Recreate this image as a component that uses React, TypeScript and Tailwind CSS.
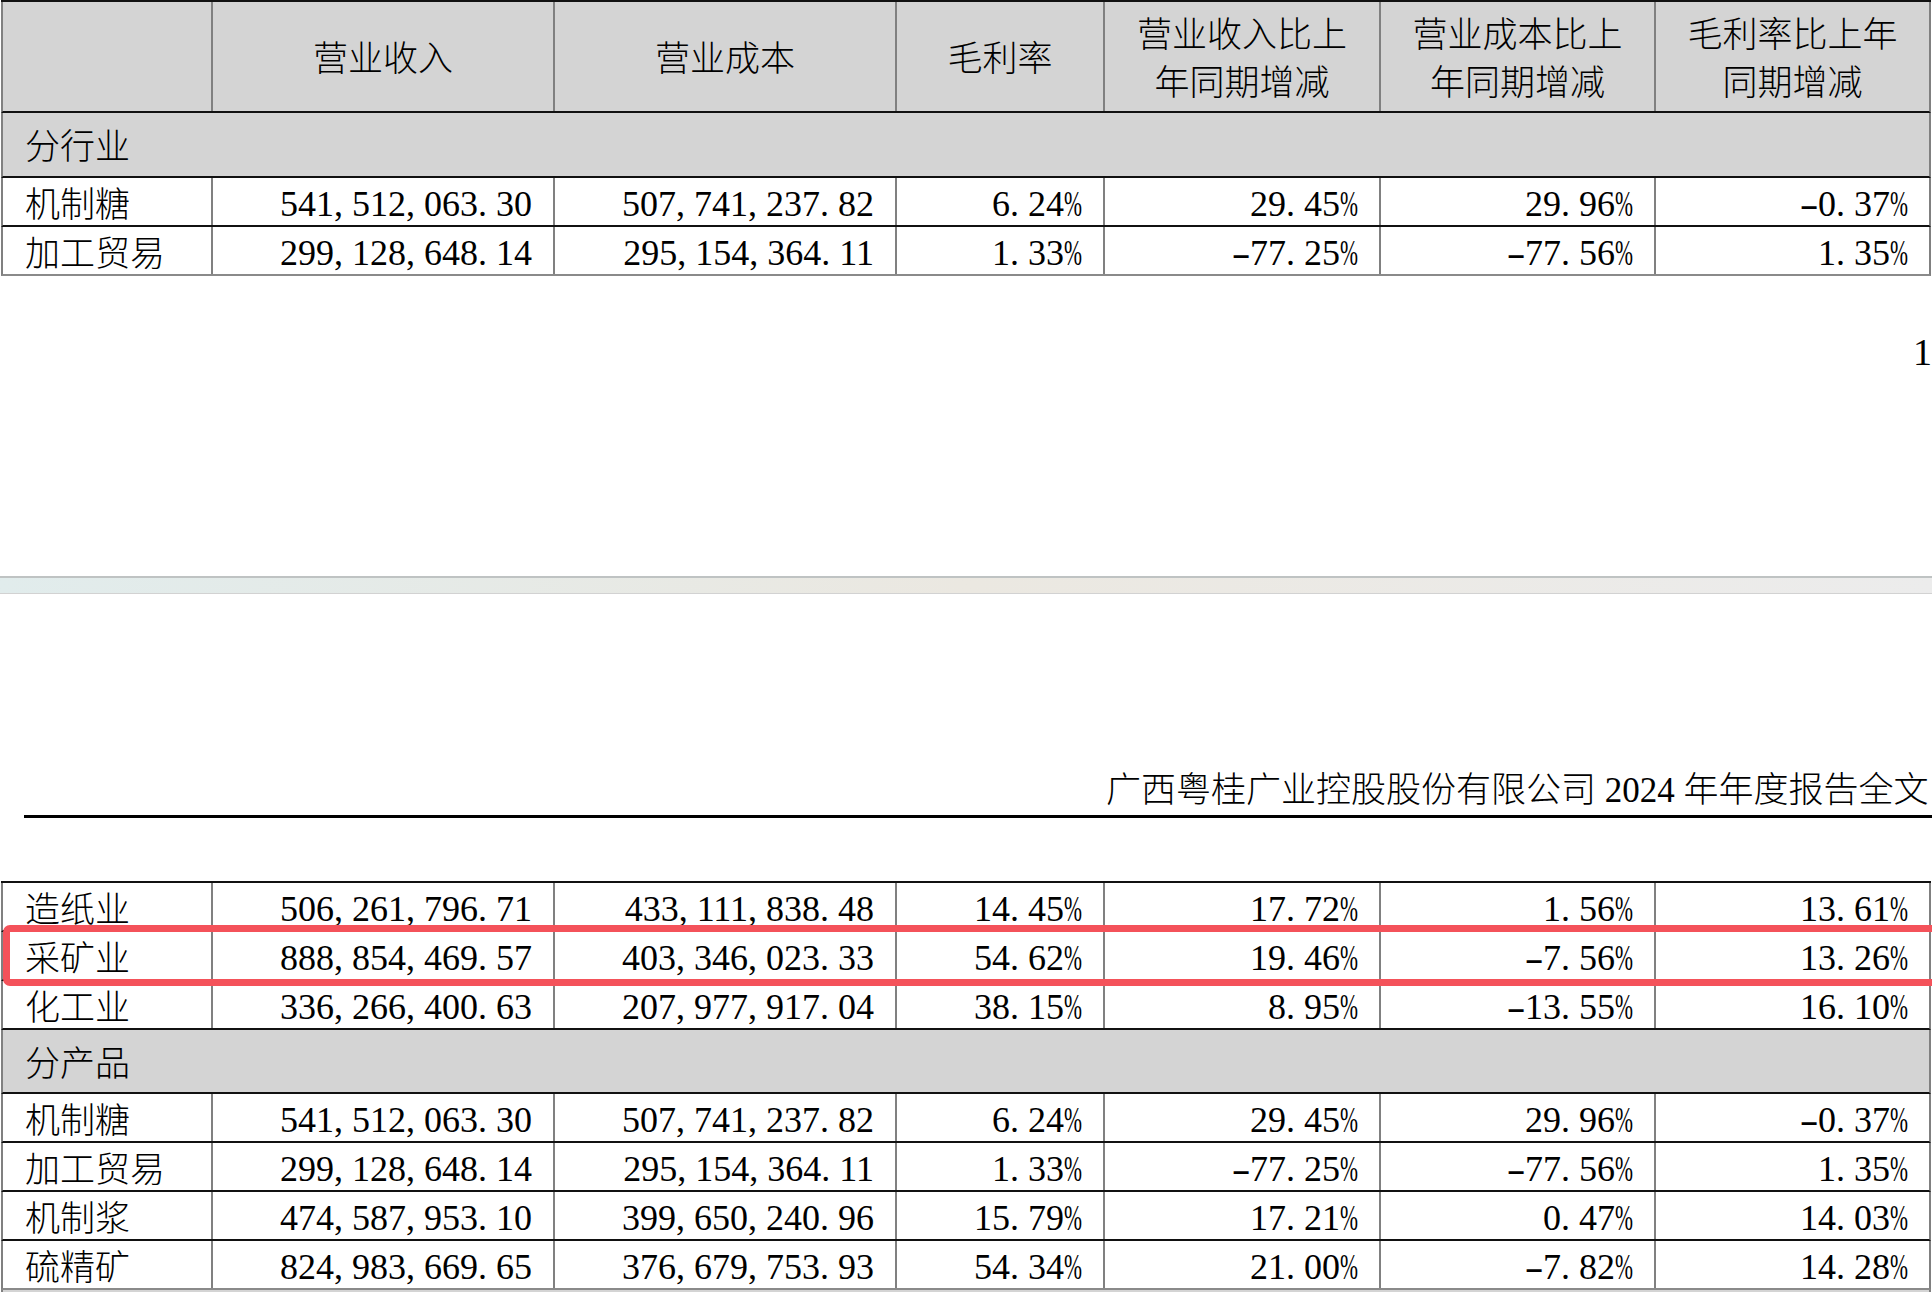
import React from "react";

type Row = { label: string; vals: string[] };

const topRows: Row[] = [
  { label: "机制糖", vals: ["541,512,063.30", "507,741,237.82", "6.24%", "29.45%", "29.96%", "-0.37%"] },
  { label: "加工贸易", vals: ["299,128,648.14", "295,154,364.11", "1.33%", "-77.25%", "-77.56%", "1.35%"] },
];

const bottomRows1: Row[] = [
  { label: "造纸业", vals: ["506,261,796.71", "433,111,838.48", "14.45%", "17.72%", "1.56%", "13.61%"] },
  { label: "采矿业", vals: ["888,854,469.57", "403,346,023.33", "54.62%", "19.46%", "-7.56%", "13.26%"] },
  { label: "化工业", vals: ["336,266,400.63", "207,977,917.04", "38.15%", "8.95%", "-13.55%", "16.10%"] },
];

const bottomRows2: Row[] = [
  { label: "机制糖", vals: ["541,512,063.30", "507,741,237.82", "6.24%", "29.45%", "29.96%", "-0.37%"] },
  { label: "加工贸易", vals: ["299,128,648.14", "295,154,364.11", "1.33%", "-77.25%", "-77.56%", "1.35%"] },
  { label: "机制浆", vals: ["474,587,953.10", "399,650,240.96", "15.79%", "17.21%", "0.47%", "14.03%"] },
  { label: "硫精矿", vals: ["824,983,669.65", "376,679,753.93", "54.34%", "21.00%", "-7.82%", "14.28%"] },
];

const widths = ["w-[342px]", "w-[342px]", "w-[208px]", "w-[276px]", "w-[275px]", "w-[275px]"];

function Num({ s }: { s: string }) {
  return (
    <span className="whitespace-nowrap">
      {s.split("").map((c, i) => {
        if (c === "," || c === ".")
          return (
            <span key={i} className="inline-block w-[0.5em] text-left">
              {c}
            </span>
          );
        if (c === "%")
          return (
            <span key={i} className="inline-block w-[0.5em] whitespace-nowrap text-left">
              <span className="inline-block origin-left scale-x-[0.6]">%</span>
            </span>
          );
        if (c === "-")
          return (
            <span key={i} className="inline-block w-[0.5em] text-center">
              <span className="inline-block scale-x-[1.6]">-</span>
            </span>
          );
        return <span key={i}>{c}</span>;
      })}
    </span>
  );
}

function DataRow({ row, last, highlight }: { row: Row; last?: boolean; highlight?: boolean }) {
  return (
    <div
      className={
        "relative flex h-[49px] border-x-2 border-x-[#808080] border-b-2 " +
        (last ? "border-b-[#8a8a8a]" : "border-b-[#111111]")
      }
    >
      <div className="flex w-[208px] items-center pl-[22px] pt-[7px] text-[35px] leading-none font-light">
        {row.label}
      </div>
      {row.vals.map((v, i) => (
        <div
          key={i}
          className={
            widths[i] +
            " flex items-center justify-end border-l-2 border-l-[#808080] pr-[21px] pt-[4px] text-[36px] leading-none"
          }
        >
          <Num s={v} />
        </div>
      ))}
      {highlight && (
        <div className="pointer-events-none absolute z-10 -top-[7px] -bottom-[7px] left-0 -right-[20px] rounded-[7px] border-[7px] border-solid border-[#f4525a]" />
      )}
    </div>
  );
}

function GroupRow({ label, h }: { label: string; h: string }) {
  return (
    <div
      className={
        h +
        " flex items-center border-x-2 border-x-[#808080] border-b-2 border-b-[#111111] bg-[#d4d4d4] pl-[22px] pt-[6px] text-[35px] leading-none font-light"
      }
    >
      {label}
    </div>
  );
}

function Header() {
  const heads: string[][] = [
    ["营业收入"],
    ["营业成本"],
    ["毛利率"],
    ["营业收入比上", "年同期增减"],
    ["营业成本比上", "年同期增减"],
    ["毛利率比上年", "同期增减"],
  ];
  return (
    <div className="flex h-[111px] border-x-2 border-x-[#808080] border-b-2 border-b-[#111111] bg-[#d4d4d4]">
      <div className="w-[208px]" />
      {heads.map((h, i) => (
        <div
          key={i}
          className={
            widths[i] +
            " flex flex-col items-center justify-center border-l-2 border-l-[#808080] pt-[6px] text-[35px] leading-[48px] font-light"
          }
        >
          {h.map((line, j) => (
            <div key={j} className="whitespace-nowrap">
              {line}
            </div>
          ))}
        </div>
      ))}
    </div>
  );
}

export default function App() {
  return (
    <div className="h-[1292px] w-[1932px] overflow-hidden bg-white text-black [font-family:'Liberation_Serif','Noto_Sans_CJK_SC',serif]">
      {/* top table */}
      <div className="ml-[1px] w-[1930px] border-t-2 border-t-[#111111]">
        <Header />
        <GroupRow label="分行业" h="h-[65px]" />
        {topRows.map((r, i) => (
          <DataRow key={i} row={r} last={i === topRows.length - 1} />
        ))}
      </div>

      {/* page number fragment */}
      <div className="mt-[56px] h-[40px] whitespace-nowrap pl-[1913px] text-[38px] leading-[40px]">1</div>

      {/* page divider */}
      <div className="mt-[204px] h-[18px] border-t-2 border-t-[#bfc3c3] border-b border-b-[#d2d2d2] bg-linear-to-r from-[#e1ecec] via-[#ebe8e1] to-[#ececec]" />

      {/* page header */}
      <div className="mt-[177px] h-[36px] whitespace-nowrap pl-[1106px] pt-[2px] text-[35px] leading-[36px] font-light">
        广西粤桂广业控股股份有限公司 2024 年年度报告全文
      </div>
      <div className="ml-[24px] mt-[8px] h-[3px] bg-black" />

      {/* bottom table */}
      <div className="ml-[1px] mt-[63px] w-[1930px] border-t-2 border-t-[#111111]">
        {bottomRows1.map((r, i) => (
          <DataRow key={i} row={r} highlight={i === 1} />
        ))}
        <GroupRow label="分产品" h="h-[64px]" />
        {bottomRows2.map((r, i) => (
          <DataRow key={i} row={r} last={i === bottomRows2.length - 1} />
        ))}
        <div className="h-[20px] border-x-2 border-x-[#808080] bg-[#d4d4d4]" />
      </div>
    </div>
  );
}
